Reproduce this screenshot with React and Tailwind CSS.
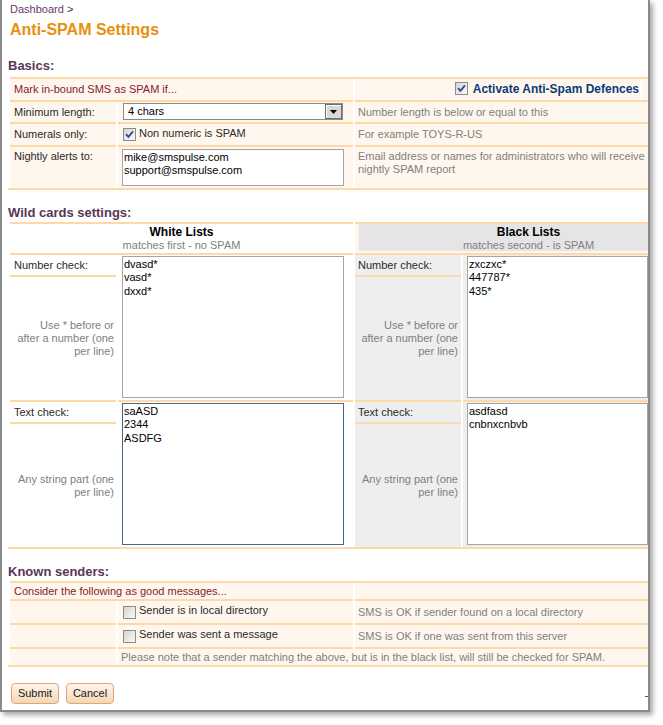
import React from "react";

const CREAM = "bg-[#fff7ee]";
const LINE = "border-[#fcd9a6]";

function Check({ checked }) {
  return (
    <span className="w-[13px] h-[13px] shrink-0 border border-[#8c8c8c] bg-[linear-gradient(135deg,#d6d6d0,#f9f9f7)] flex items-center justify-center">
      {checked && (
        <svg width="9" height="9" viewBox="0 0 9 9">
          <path d="M1 4.2 L3.4 6.8 L8 1.4" fill="none" stroke="#2b47a3" strokeWidth="1.8" />
        </svg>
      )}
    </span>
  );
}

function Box({ w, h, lines, border = "border-[#a5a5a5]" }) {
  return (
    <div className={`${w} ${h} border ${border} bg-white pl-[1px] pt-[1px] leading-[13.4px] text-black`}>
      {lines.map((l, i) => (
        <div key={i}>{l}</div>
      ))}
    </div>
  );
}

function ListHalf({ gray, title, sub, numbers, texts, taW, textBorder }) {
  const cellBg = gray ? "bg-[#eeeeee]" : "bg-white";
  const labelPl = gray ? "pl-[3px]" : "pl-[4px]";
  const descPr = gray ? "pr-[3px]" : "pr-[2px]";
  return (
    <div className="w-[343px]">
      {gray ? (
        <div className={`h-[33px] border-y-2 ${LINE} ${CREAM} pl-[4px] pb-[2px]`}>
          <div className="h-[27px] bg-[#e5e5e5] flex flex-col items-center pt-[1px]">
            <div className="text-[12px] leading-[14px] font-bold text-black">{title}</div>
            <div className="leading-[13px] text-[#808080]">{sub}</div>
          </div>
        </div>
      ) : (
        <div className={`h-[33px] border-y-2 ${LINE} bg-white flex flex-col items-center pt-[1px]`}>
          <div className="text-[12px] leading-[14px] font-bold text-black">{title}</div>
          <div className="leading-[13px] text-[#808080]">{sub}</div>
        </div>
      )}
      <div className="grid grid-cols-[106px_235px] grid-rows-[22px_125px_22px_123px] gap-x-[2px]">
        <div className={`${cellBg} border-b-2 ${LINE} ${labelPl} pt-[4px] text-[#2a2a2a]`}>Number check:</div>
        <div className={`row-span-2 ${cellBg} border-b-2 ${LINE} pl-[4px] pt-[1px]`}>
          <Box w={taW} h="h-[142px]" lines={numbers} />
        </div>
        <div className={`${cellBg} border-b-2 ${LINE} flex items-center justify-end text-right ${descPr} text-[#808080]`}>
          <div>
            Use * before or
            <br />
            after a number (one
            <br />
            per line)
          </div>
        </div>
        <div className={`${cellBg} border-b-2 ${LINE} ${labelPl} pt-[4px] text-[#2a2a2a]`}>Text check:</div>
        <div className={`row-span-2 ${cellBg} pl-[4px] pt-[1px]`}>
          <Box w={taW} h="h-[142px]" lines={texts} border={textBorder} />
        </div>
        <div className={`${cellBg} flex items-center justify-end text-right ${descPr} text-[#808080]`}>
          <div>
            Any string part (one
            <br />
            per line)
          </div>
        </div>
      </div>
    </div>
  );
}

export default function App() {
  return (
    <div className="w-[663px] h-[725px] bg-white font-['Liberation_Sans',Arial,sans-serif] text-[11px] leading-[13px] text-[#2a2a2a]">
      <div className="relative w-[650px] h-[712px] border-x-2 border-b-2 border-[#8a8a8a] overflow-hidden bg-white shadow-[3px_3px_5px_rgba(0,0,0,0.35)]">
        <div className="absolute right-0 top-[696px] w-[3px] h-[1px] bg-[#555]" />
        <div className="w-[700px] pl-[6px]">
          <div className="pt-[3px] pl-[2px]">
            <span className="text-[#6a3a6a]">Dashboard</span>
            <span className="text-[#333]"> &gt;</span>
          </div>
          <h1 className="mt-[4px] pl-[2px] text-[16px] leading-[20px] font-bold text-[#e8900c]">Anti-SPAM Settings</h1>

          <h2 className="mt-[17px] text-[13px] leading-[18px] font-bold text-[#5a3656]">Basics:</h2>
          <div className={`mt-[2px] border-b-2 ${LINE}`}>
            <div className={`ml-[2px] border-t-2 ${LINE} grid grid-cols-[106px_235px_345px] gap-x-[2px]`}>
              <div className={`col-span-2 h-[23px] ${CREAM} border-b-2 ${LINE} flex items-center pl-[4px] text-[#86202a]`}>
                Mark in-bound SMS as SPAM if...
              </div>
              <div className={`h-[23px] ${CREAM} border-b-2 ${LINE} flex`}>
                <div className="w-[287px] border-r-2 border-white flex items-center justify-end gap-[5px] pr-[1px] pb-[2px]">
                  <Check checked />
                  <span className="text-[12px] leading-[14px] font-bold text-[#0b3a78]">Activate Anti-Spam Defences</span>
                </div>
              </div>

              <div className={`h-[22px] ${CREAM} border-b-2 ${LINE} flex items-center pl-[4px]`}>Minimum length:</div>
              <div className={`h-[22px] ${CREAM} border-b-2 ${LINE} pl-[5px] pt-[1px]`}>
                <div className="w-[220px] h-[17px] border border-[#8a8a8a] bg-white flex items-center">
                  <span className="flex-1 pl-[4px] text-black">4 chars</span>
                  <span className="w-[17px] h-[15px] border border-[#6e6e6e] bg-[#d8d8d8] shadow-[inset_1px_1px_0_#ffffff] flex items-center justify-center">
                    <svg width="7" height="4" viewBox="0 0 7 4">
                      <path d="M0 0h7L3.5 4z" fill="#000" />
                    </svg>
                  </span>
                </div>
              </div>
              <div className={`h-[22px] ${CREAM} border-b-2 ${LINE} flex items-center pl-[3px] text-[#808080]`}>
                Number length is below or equal to this
              </div>

              <div className={`h-[23px] ${CREAM} border-b-2 ${LINE} flex items-center pl-[4px]`}>Numerals only:</div>
              <div className={`h-[23px] ${CREAM} border-b-2 ${LINE} flex items-center gap-[3px] pl-[5px]`}>
                <Check checked />
                <span className="pb-[3px]">Non numeric is SPAM</span>
              </div>
              <div className={`h-[23px] ${CREAM} border-b-2 ${LINE} flex items-center pl-[3px] text-[#808080]`}>
                For example TOYS-R-US
              </div>

              <div className={`h-[41px] ${CREAM} pl-[4px] pt-[3px]`}>Nightly alerts to:</div>
              <div className={`h-[41px] ${CREAM} pl-[4px] pt-[2px]`}>
                <Box w="w-[222px]" h="h-[37px]" lines={["mike@smspulse.com", "support@smspulse.com"]} />
              </div>
              <div className={`h-[41px] ${CREAM} pl-[3px] pt-[3px] leading-[13.4px] text-[#808080]`}>
                <div className="whitespace-nowrap">Email address or names for administrators who will receive an</div>
                <div>nightly SPAM report</div>
              </div>
            </div>
          </div>

          <h2 className="mt-[14px] text-[13px] leading-[18px] font-bold text-[#5a3656]">Wild cards settings:</h2>
          <div className={`border-b-2 ${LINE}`}>
            <div className="ml-[2px] flex gap-x-[2px]">
              <ListHalf
                title="White Lists"
                sub="matches first - no SPAM"
                numbers={["dvasd*", "vasd*", "dxxd*"]}
                texts={["saASD", "2344", "ASDFG"]}
                taW="w-[222px]"
                textBorder="border-[#44678f]"
              />
              <ListHalf
                gray
                title="Black Lists"
                sub="matches second - is SPAM"
                numbers={["zxczxc*", "447787*", "435*"]}
                texts={["asdfasd", "cnbnxcnbvb"]}
                taW="w-[181px]"
                textBorder="border-[#a5a5a5]"
              />
            </div>
          </div>

          <h2 className="mt-[14px] text-[13px] leading-[18px] font-bold text-[#5a3656]">Known senders:</h2>
          <div className={`border-b-2 ${LINE}`}>
            <div className={`ml-[2px] border-t-2 ${LINE} grid grid-cols-[106px_235px_345px] gap-x-[2px]`}>
              <div className={`col-span-2 h-[18px] ${CREAM} border-b-2 ${LINE} flex items-center pl-[4px] text-[#86202a]`}>
                Consider the following as good messages...
              </div>
              <div className={`h-[18px] ${CREAM} border-b-2 ${LINE}`} />

              <div className={`h-[24px] ${CREAM} border-b-2 ${LINE}`} />
              <div className={`h-[24px] ${CREAM} border-b-2 ${LINE} flex items-center gap-[3px] pl-[5px]`}>
                <Check />
                <span className="pb-[3px]">Sender is in local directory</span>
              </div>
              <div className={`h-[24px] ${CREAM} border-b-2 ${LINE} flex items-center pl-[3px] text-[#808080]`}>
                SMS is OK if sender found on a local directory
              </div>

              <div className={`h-[24px] ${CREAM} border-b-2 ${LINE}`} />
              <div className={`h-[24px] ${CREAM} border-b-2 ${LINE} flex items-center gap-[3px] pl-[5px]`}>
                <Check />
                <span className="pb-[3px]">Sender was sent a message</span>
              </div>
              <div className={`h-[24px] ${CREAM} border-b-2 ${LINE} flex items-center pl-[3px] text-[#808080]`}>
                SMS is OK if one was sent from this server
              </div>

              <div className={`h-[16px] ${CREAM}`} />
              <div className={`col-span-2 h-[16px] ${CREAM} flex items-center pl-[3px] text-[#808080] whitespace-nowrap`}>
                Please note that a sender matching the above, but is in the black list, will still be checked for SPAM.
              </div>
            </div>
          </div>

          <div className="mt-[16px] ml-[3px] flex gap-[7px]">
            <button className="w-[48px] h-[21px] rounded-[4px] border border-[#dfa676] bg-[linear-gradient(180deg,#fff6ec,#f6d6b2)] text-[11px] text-[#1a1a1a] flex items-center justify-center">
              Submit
            </button>
            <button className="w-[48px] h-[21px] rounded-[4px] border border-[#dfa676] bg-[linear-gradient(180deg,#fff6ec,#f6d6b2)] text-[11px] text-[#1a1a1a] flex items-center justify-center">
              Cancel
            </button>
          </div>
        </div>
      </div>
    </div>
  );
}
